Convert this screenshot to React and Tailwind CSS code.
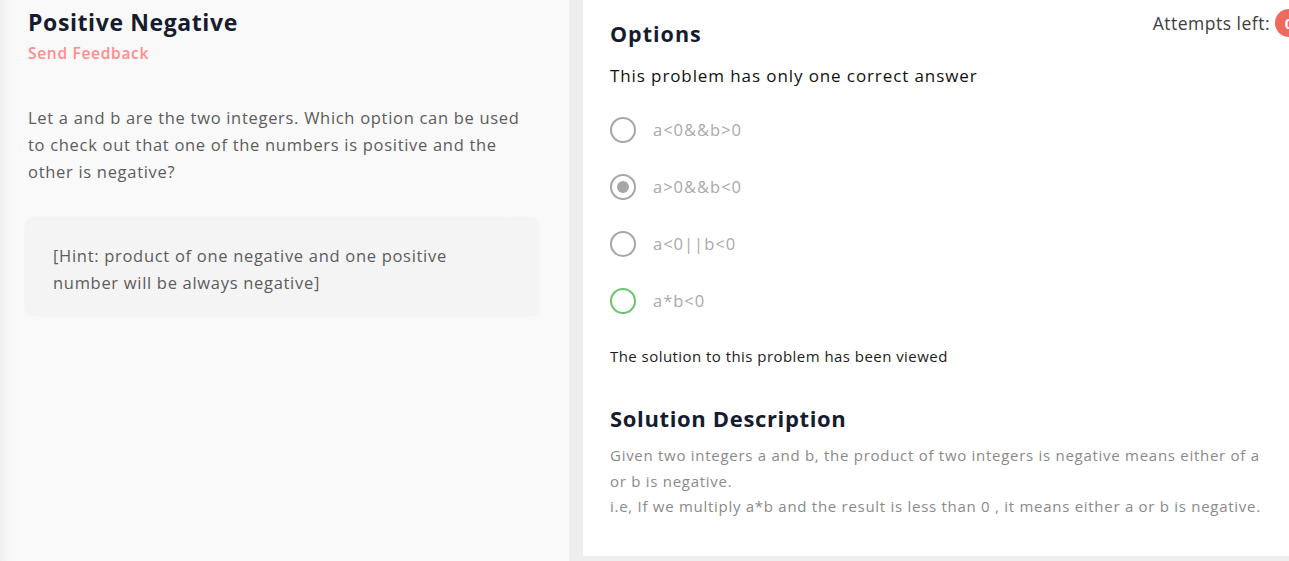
import React from 'react';

const options = [
  { label: 'a<0&&b>0', state: 'none' },
  { label: 'a>0&&b<0', state: 'selected' },
  { label: 'a<0||b<0', state: 'none' },
  { label: 'a*b<0', state: 'correct' },
];

const Radio = ({ state }) => {
  const border = state === 'correct' ? 'border-[#6cc46f]' : 'border-[#a6a6a6]';
  return (
    <div className={`w-[26px] h-[26px] rounded-full border-2 ${border} flex items-center justify-center shrink-0`}>
      {state === 'selected' && <div className="w-[12px] h-[12px] rounded-full bg-[#a6a6a6]"></div>}
    </div>
  );
};

export default function App() {
  return (
    <div className="w-[1289px] h-[561px] bg-[#eeeeee] flex overflow-hidden font-['Open_Sans','Noto_Sans',sans-serif]">
      {/* Problem statement */}
      <div className="w-[569px] h-full bg-[#f9f9f9] bg-gradient-to-r from-[#efefef] from-0% to-[#f9f9f9] to-[2%] pl-[28px] pr-[30px] pt-[7px]">
        <h1 className="text-[23px] leading-[30px] font-bold text-[#161b2e] tracking-[0.6px]">Positive Negative</h1>
        <div className="mt-[5px] text-[15.5px] leading-[22px] font-semibold text-[#ff8c8c] tracking-[0.7px]">Send Feedback</div>
        <p className="mt-[40px] text-[16.5px] leading-[27px] text-[#5c5c5c] tracking-[0.7px]">
          Let a and b are the two integers. Which option can be used to check out that one of the numbers is positive and the other is negative?
        </p>
        <div className="mt-[32px] -ml-[3px] w-[514px] h-[98px] rounded-lg bg-[#f4f4f4] shadow-[0_1px_3px_rgba(0,0,0,0.04)] pl-[28px] pr-[60px] pt-[25px]">
          <p className="text-[16.5px] leading-[27px] text-[#5c5c5c] tracking-[0.7px]">
            [Hint: product of one negative and one positive number will be always negative]
          </p>
        </div>
      </div>

      {/* Options panel */}
      <div className="ml-[14px] w-[706px] h-[556px] bg-white pl-[27px] pt-[19px] relative overflow-hidden">
        <div className="absolute -right-[14px] top-[9px] flex items-center gap-[5px]">
          <span className="text-[17.5px] leading-[28px] font-medium text-[#3c3c46] tracking-[0.5px]">Attempts left:</span>
          <span className="w-[28px] h-[28px] rounded-full bg-[#f0695f] flex items-center justify-center text-white font-bold text-[15px] leading-none">0</span>
        </div>

        <h2 className="text-[21.5px] leading-[30px] font-bold text-[#161b2e] tracking-[1px]">Options</h2>
        <div className="mt-[15px] text-[17px] leading-[24px] text-[#111] tracking-[0.9px]">This problem has only one correct answer</div>

        <div className="mt-[29px] flex flex-col gap-[31px]">
          {options.map((o) => (
            <div key={o.label} className="flex items-center gap-[17px] h-[26px]">
              <Radio state={o.state} />
              <span className="text-[16.5px] leading-[22px] text-[#a9a9a9] tracking-[1px]">{o.label}</span>
            </div>
          ))}
        </div>

        <div className="mt-[31px] text-[15px] leading-[22px] text-[#1c1c1c] tracking-[0.45px]">The solution to this problem has been viewed</div>

        <h2 className="mt-[36px] text-[22px] leading-[30px] font-bold text-[#161b2e] tracking-[0.65px]">Solution Description</h2>
        <div className="mt-[10px] pr-[14px] text-[15px] leading-[25.5px] text-[#8a8a8a] tracking-[0.72px]">
          <p>Given two integers a and b, the product of two integers is negative means either of a or b is negative.</p>
          <p>i.e, If we multiply a*b and the result is less than 0 , it means either a or b is negative.</p>
        </div>
      </div>
    </div>
  );
}
